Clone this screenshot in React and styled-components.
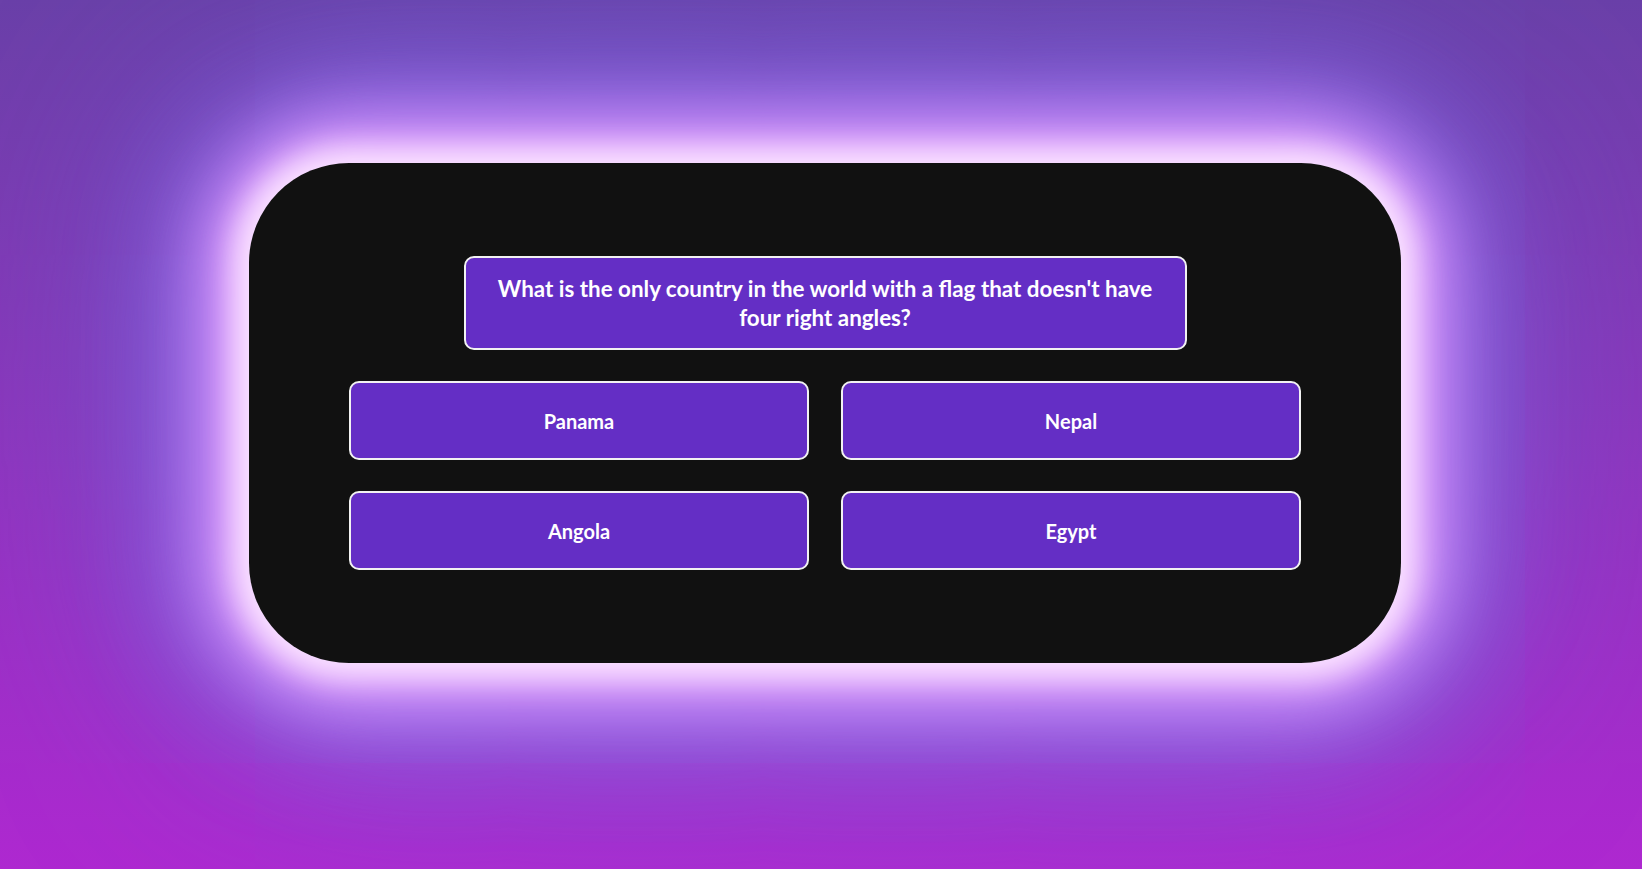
import React from 'react';
import styled, { createGlobalStyle } from 'styled-components';

const GlobalStyle = createGlobalStyle`
  html, body {
    margin: 0;
    padding: 0;
  }
  body {
    min-height: 100vh;
    background: linear-gradient(to bottom, #6a40a8 0%, #8c36bd 50%, #ae28d0 100%);
    font-family: Lato, "DejaVu Sans", sans-serif;
    overflow: hidden;
  }
`;

const Page = styled.div`
  height: 869px;
  box-sizing: border-box;
  display: flex;
  justify-content: center;
  align-items: flex-start;
  padding: 163px 0 0 8px;
`;

const Card = styled.div`
  width: 1152px;
  height: 500px;
  box-sizing: border-box;
  padding: 0 100px;
  background-color: #111111;
  border-radius: 100px;
  display: flex;
  flex-direction: column;
  align-items: center;
  justify-content: center;
  gap: 31px;
  box-shadow:
    0 0 30px 16px #fbe4ff,
    0 0 66px 38px #e2a0ff,
    0 0 110px 58px #a46cf0,
    0 0 200px 84px #6a64d2;
`;

const Question = styled.div`
  width: 723px;
  box-sizing: border-box;
  padding: 16px 32px;
  background-color: #642ec5;
  border: 2px solid #f2f2f2;
  border-radius: 10px;
  color: #fff;
  font-size: 22.4px;
  font-weight: 700;
  line-height: 29px;
  text-align: center;
`;

const AnswerGrid = styled.div`
  width: 100%;
  display: grid;
  grid-template-columns: 1fr 1fr;
  gap: 31px 32px;
`;

const AnswerButton = styled.button`
  height: 79px;
  box-sizing: border-box;
  background-color: #642ec5;
  border: 2px solid #f2f2f2;
  border-radius: 10px;
  color: #fff;
  font-family: inherit;
  font-size: 20px;
  font-weight: 700;
  cursor: pointer;

  &:hover {
    background-color: #6f38d2;
  }
`;

const answers = ['Panama', 'Nepal', 'Angola', 'Egypt'];

const App = () => {
  return (
    <>
      <GlobalStyle />
      <Page>
        <Card>
          <Question>
            What is the only country in the world with a flag that doesn't have four right angles?
          </Question>
          <AnswerGrid>
            {answers.map(answer => (
              <AnswerButton key={answer}>{answer}</AnswerButton>
            ))}
          </AnswerGrid>
        </Card>
      </Page>
    </>
  );
};

export default App;
